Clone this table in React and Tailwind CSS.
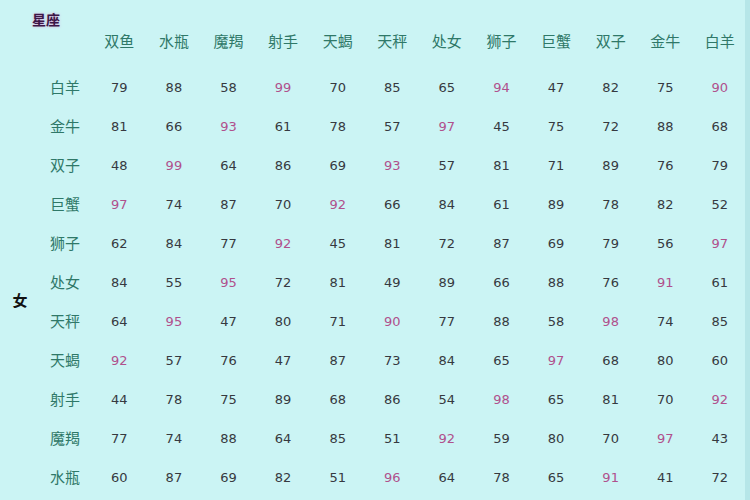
import React from 'react';

const signs = ['双鱼', '水瓶', '魔羯', '射手', '天蝎', '天秤', '处女', '狮子', '巨蟹', '双子', '金牛', '白羊'];

// score table, * = highlighted
const rows = [
  ['白羊', '79 88 58 99* 70 85 65 94* 47 82 75 90*'],
  ['金牛', '81 66 93* 61 78 57 97* 45 75 72 88 68'],
  ['双子', '48 99* 64 86 69 93* 57 81 71 89 76 79'],
  ['巨蟹', '97* 74 87 70 92* 66 84 61 89 78 82 52'],
  ['狮子', '62 84 77 92* 45 81 72 87 69 79 56 97*'],
  ['处女', '84 55 95* 72 81 49 89 66 88 76 91* 61'],
  ['天秤', '64 95* 47 80 71 90* 77 88 58 98* 74 85'],
  ['天蝎', '92* 57 76 47 87 73 84 65 97* 68 80 60'],
  ['射手', '44 78 75 89 68 86 54 98* 65 81 70 92*'],
  ['魔羯', '77 74 88 64 85 51 92* 59 80 70 97* 43'],
  ['水瓶', '60 87 69 82 51 96* 64 78 65 91* 41 72'],
];

export default function App() {
  return (
    <div className="w-[750px] h-[500px] overflow-hidden bg-[#cbf4f4] border-r-[5px] border-[#b6e6e8] font-['Noto_Sans_CJK_SC','DejaVu_Sans',sans-serif]">
      <div className="grid grid-cols-[38px_54px_repeat(12,54.6px)] grid-rows-[68px_repeat(11,39px)]">
        {/* header */}
        <div className="col-span-2 pl-[32px] pt-[6px]">
          <span className="text-[14px] font-bold text-[#3b1646] [text-shadow:0_0_3px_#d9a6d9]">星座</span>
        </div>
        {signs.map((s) => (
          <div key={s} className="flex items-end justify-center pb-[16px] text-[15px] text-[#2f7868]">
            {s}
          </div>
        ))}

        {/* 女 */}
        <div className="row-span-11 flex items-center justify-center pt-[36px] pl-[2px] text-[15px] font-bold text-[#111]">
          女
        </div>

        {rows.map(([label, vals]) => (
          <React.Fragment key={label}>
            <div className="flex items-center justify-center text-[15px] text-[#2f7868]">{label}</div>
            {vals.split(' ').map((v, i) => {
              const hot = v.endsWith('*');
              return (
                <div
                  key={i}
                  className={`flex items-center justify-center text-[13px] font-['DejaVu_Sans','Liberation_Sans',sans-serif] ${hot ? 'text-[#b0508c]' : 'text-[#363940]'}`}
                >
                  {v.replace('*', '')}
                </div>
              );
            })}
          </React.Fragment>
        ))}
      </div>
    </div>
  );
}
